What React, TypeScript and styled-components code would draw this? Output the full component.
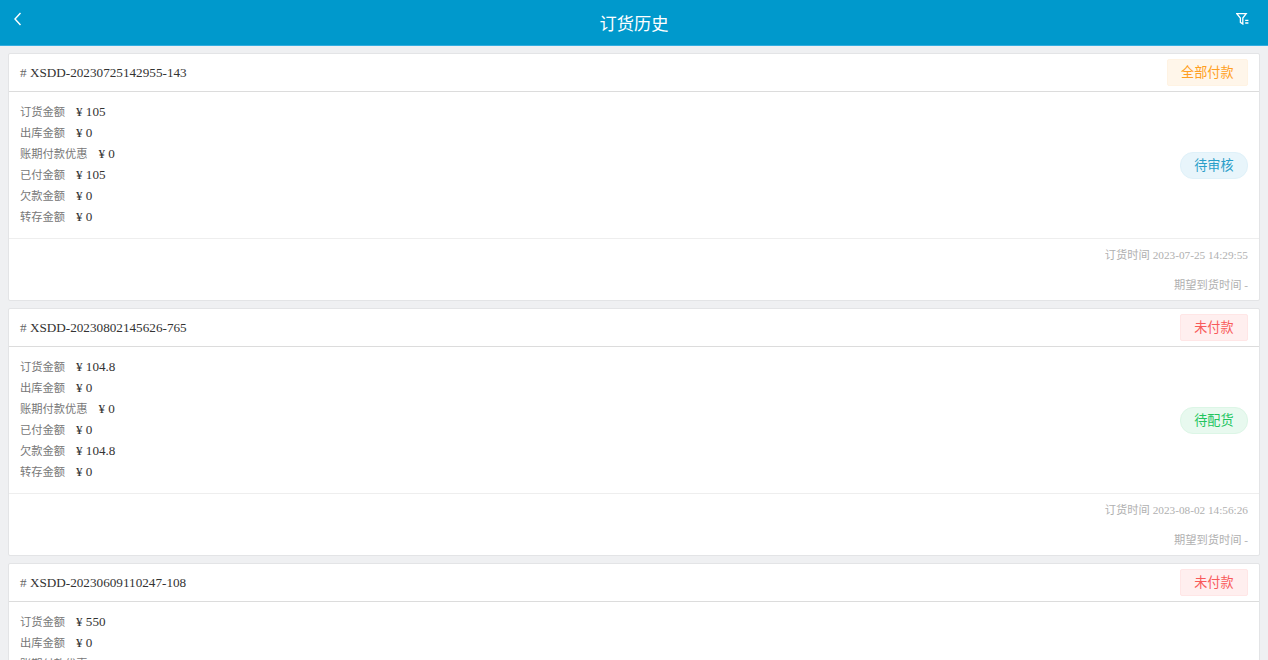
import styled, { createGlobalStyle } from 'styled-components';

interface IOrder {
  no: string;
  payStatus: string;
  payTone: 'orange' | 'red';
  state: string;
  stateTone: 'blue' | 'green';
  amount: string;
  paid: string;
  debt: string;
  time: string;
}

const tones = {
  orange: { color: '#ff9f22', bg: '#fff6ea', border: '#fff3e3' },
  red: { color: '#f85a5a', bg: '#ffefef', border: '#ffe6e6' },
  blue: { color: '#2a9fc9', bg: '#e8f5fb', border: '#dff1f9' },
  green: { color: '#22c55e', bg: '#e8f9ef', border: '#dcf6e6' },
};

const orders: IOrder[] = [
  { no: 'XSDD-20230725142955-143', payStatus: '全部付款', payTone: 'orange', state: '待审核', stateTone: 'blue', amount: '105', paid: '105', debt: '0', time: '2023-07-25 14:29:55' },
  { no: 'XSDD-20230802145626-765', payStatus: '未付款', payTone: 'red', state: '待配货', stateTone: 'green', amount: '104.8', paid: '0', debt: '104.8', time: '2023-08-02 14:56:26' },
  { no: 'XSDD-20230609110247-108', payStatus: '未付款', payTone: 'red', state: '待配货', stateTone: 'green', amount: '550', paid: '0', debt: '550', time: '2023-06-09 11:02:47' },
];

const GlobalStyle = createGlobalStyle`
  html, body {
    margin: 0;
    height: 100%;
    overflow: hidden;
    background: #eff0f2;
    font-family: "Liberation Serif", "Noto Sans CJK SC", serif;
  }
`;

const Page = styled.div`
  height: 660px;
  overflow: hidden;
`;
const TopBar = styled.header`
  height: 45px;
  background: #0099cc;
  border-bottom: 1px solid #33ade0;
  display: flex;
  align-items: flex-start;
  justify-content: space-between;
  padding: 0 19px 0 12px;
  position: relative;
`;
const TopTitle = styled.h1`
  position: absolute;
  left: 0;
  right: 0;
  top: 13px;
  margin: 0;
  text-align: center;
  color: #fff;
  font-size: 17.25px;
  line-height: 24px;
  font-weight: 400;
`;
const BarIcon = styled.svg`
  display: block;
  margin-top: 12px;
`;
const List = styled.main`
  padding: 7px 8px 0;
  display: flex;
  flex-direction: column;
  gap: 7px;
`;
const Card = styled.section`
  flex: none;
  background: #fff;
  border: 1px solid #e3e4e6;
  border-radius: 2px;
`;
const CardHead = styled.div`
  height: 37px;
  border-bottom: 1px solid #dcdcdc;
  display: flex;
  align-items: center;
  justify-content: space-between;
  padding: 0 11px;
  font-size: 13.2px;
  color: #333;
`;
const Hash = styled.span`
  color: #666;
`;
const PayTag = styled.span<{ $tone: keyof typeof tones }>`
  height: 25px;
  line-height: 25px;
  padding: 0 13.5px;
  font-size: 13.125px;
  border-radius: 2px;
  color: ${({ $tone }) => tones[$tone].color};
  background: ${({ $tone }) => tones[$tone].bg};
  border: 1px solid ${({ $tone }) => tones[$tone].border};
`;
const CardBody = styled.div`
  height: 146px;
  display: flex;
  align-items: center;
  justify-content: space-between;
  padding: 0 11px;
  border-bottom: 1px solid #eeeeee;
`;
const Rows = styled.div`
  display: flex;
  flex-direction: column;
  margin-top: -3px;
`;
const Row = styled.div`
  height: 21px;
  line-height: 21px;
  font-size: 13.125px;
  color: #333;
  white-space: nowrap;
`;
const RowLabel = styled.span`
  font-size: 11.25px;
  color: #777;
  margin-right: 11px;
`;
const StatePill = styled.span<{ $tone: keyof typeof tones }>`
  height: 25px;
  line-height: 25px;
  padding: 0 13.5px;
  font-size: 13.125px;
  border-radius: 13px;
  color: ${({ $tone }) => tones[$tone].color};
  background: ${({ $tone }) => tones[$tone].bg};
  border: 1px solid ${({ $tone }) => tones[$tone].border};
`;
const CardFoot = styled.div`
  height: 61px;
  padding: 1px 11px 0;
  box-sizing: border-box;
  text-align: right;
  font-size: 11.25px;
  color: #b0b0b0;
`;
const FootLine = styled.div`
  height: 30px;
  line-height: 30px;
`;

function OrderCard({ order }: { order: IOrder }): JSX.Element {
  return (
    <Card>
      <CardHead>
        <span><Hash># </Hash>{order.no}</span>
        <PayTag $tone={order.payTone}>{order.payStatus}</PayTag>
      </CardHead>
      <CardBody>
        <Rows>
          <Row><RowLabel>订货金额</RowLabel>¥ {order.amount}</Row>
          <Row><RowLabel>出库金额</RowLabel>¥ 0</Row>
          <Row><RowLabel>账期付款优惠</RowLabel>¥ 0</Row>
          <Row><RowLabel>已付金额</RowLabel>¥ {order.paid}</Row>
          <Row><RowLabel>欠款金额</RowLabel>¥ {order.debt}</Row>
          <Row><RowLabel>转存金额</RowLabel>¥ 0</Row>
        </Rows>
        <StatePill $tone={order.stateTone}>{order.state}</StatePill>
      </CardBody>
      <CardFoot>
        <FootLine>订货时间 {order.time}</FootLine>
        <FootLine>期望到货时间 -</FootLine>
      </CardFoot>
    </Card>
  );
}

function App(): JSX.Element {
  return (
    <Page>
      <GlobalStyle />
      <TopBar>
        <BarIcon width="12" height="14" viewBox="0 0 12 14" fill="none" stroke="#fff" strokeWidth="1.4">
          <path d="M8.5 1 3 7l5.5 6" />
        </BarIcon>
        <TopTitle>订货历史</TopTitle>
        <BarIcon width="13" height="13" viewBox="0 0 13 13" fill="none" stroke="#fff" strokeWidth="1.3">
          <path d="M.8 1.6h9.4L6.8 6v6L4.4 10.4V6z" />
          <path d="M9.2 8.4h3.2M9.2 11h3.2" />
        </BarIcon>
      </TopBar>
      <List>
        {orders.map((v: IOrder) => <OrderCard key={v.no} order={v} />)}
      </List>
    </Page>
  );
}

export default App;
